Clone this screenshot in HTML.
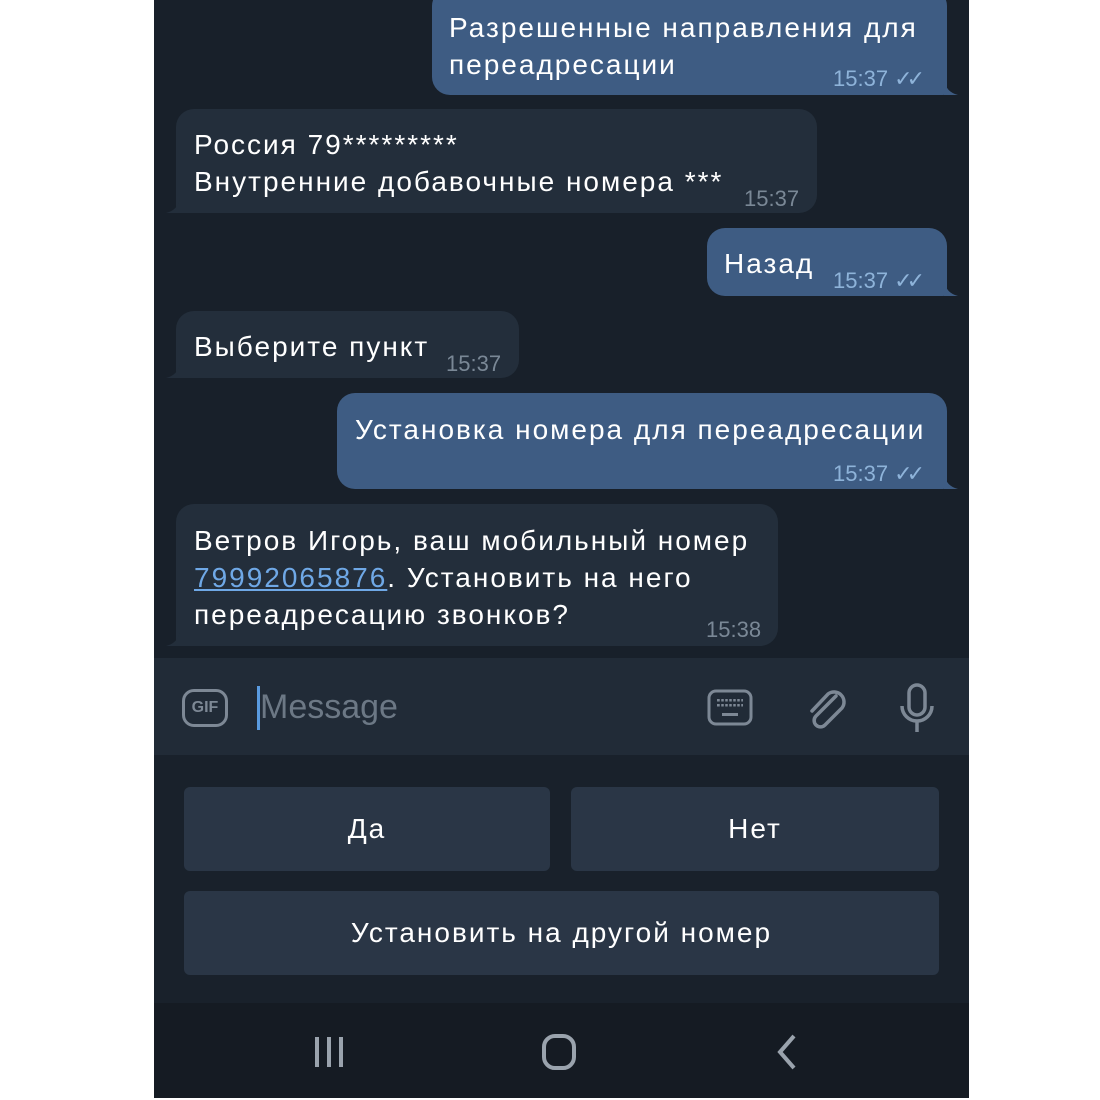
<!DOCTYPE html>
<html><head><meta charset="utf-8"><style>
body{margin:0;width:1100px;height:1100px;background:#fff;position:relative;overflow:hidden;font-family:"Liberation Sans",sans-serif;}
#ph{position:absolute;left:154px;top:0;width:815px;height:1098px;background:#18202a;overflow:hidden}
.b{position:absolute;border-radius:18px;color:#fff;font-size:28px;white-space:nowrap;line-height:37px}
.b>div:first-child{letter-spacing:2px}
.o{background:#3e5c83}
.i{background:#232e3b}
.t{position:absolute;font-size:22px;}
.o .t{color:#8eb3d9}
.i .t{color:#7a8896}
.btn{position:absolute;background:#2a3646;border-radius:6px;color:#fff;font-size:28px;text-align:center;line-height:84px;letter-spacing:2px}
</style></head><body>
<div id="ph">
<div class="b o" style="left:278px;top:-12px;width:515px;height:107px;border-bottom-right-radius:4px">
 <div style="position:absolute;left:17px;top:21px">Разрешенные направления для<br>переадресации</div>
 <div class="t" style="left:401px;top:72px">15:37 <span style="letter-spacing:-6px">✓✓</span></div>
</div>
<svg style="position:absolute;left:790px;top:80px" width="16" height="15"><path d="M0 0 Q2 12 14 15 L0 15Z" fill="#3e5c83"/></svg>
<div class="b i" style="left:22px;top:109px;width:641px;height:104px;border-bottom-left-radius:4px">
 <div style="position:absolute;left:18px;top:17px">Россия 79*********<br>Внутренние добавочные номера ***</div>
 <div class="t" style="left:568px;top:71px">15:37</div>
</div>
<svg style="position:absolute;left:10px;top:198px" width="16" height="15"><path d="M16 0 Q14 12 2 15 L16 15Z" fill="#232e3b"/></svg>
<div class="b o" style="left:553px;top:228px;width:240px;height:68px;border-bottom-right-radius:4px">
 <div style="position:absolute;left:17px;top:17px">Назад</div>
 <div class="t" style="left:126px;top:34px">15:37 <span style="letter-spacing:-6px">✓✓</span></div>
</div>
<svg style="position:absolute;left:790px;top:281px" width="16" height="15"><path d="M0 0 Q2 12 14 15 L0 15Z" fill="#3e5c83"/></svg>
<div class="b i" style="left:22px;top:311px;width:343px;height:67px;border-bottom-left-radius:4px">
 <div style="position:absolute;left:18px;top:17px">Выберите пункт</div>
 <div class="t" style="left:270px;top:34px">15:37</div>
</div>
<svg style="position:absolute;left:10px;top:363px" width="16" height="15"><path d="M16 0 Q14 12 2 15 L16 15Z" fill="#232e3b"/></svg>
<div class="b o" style="left:183px;top:393px;width:610px;height:96px;border-bottom-right-radius:4px">
 <div style="position:absolute;left:18px;top:18px">Установка номера для переадресации</div>
 <div class="t" style="left:496px;top:62px">15:37 <span style="letter-spacing:-6px">✓✓</span></div>
</div>
<svg style="position:absolute;left:790px;top:474px" width="16" height="15"><path d="M0 0 Q2 12 14 15 L0 15Z" fill="#3e5c83"/></svg>
<div class="b i" style="left:22px;top:504px;width:602px;height:142px;border-bottom-left-radius:4px">
 <div style="position:absolute;left:18px;top:18px">Ветров Игорь, ваш мобильный номер<br><span style="color:#6fa8e6;text-decoration:underline">79992065876</span>. Установить на него<br>переадресацию звонков?</div>
 <div class="t" style="left:530px;top:107px">15:38</div>
</div>
<svg style="position:absolute;left:10px;top:631px" width="16" height="15"><path d="M16 0 Q14 12 2 15 L16 15Z" fill="#232e3b"/></svg>
<div style="position:absolute;left:0;top:658px;width:815px;height:97px;background:#212b37">
 <div style="position:absolute;left:28px;top:31px;width:46px;height:38px;border:3px solid #7d8895;border-radius:12px;box-sizing:border-box;color:#7d8895;font-size:16px;font-weight:bold;text-align:center;line-height:32px">GIF</div>
 <div style="position:absolute;left:103px;top:28px;width:3px;height:44px;background:#5a9be0"></div>
 <div style="position:absolute;left:106px;top:30px;color:#6c7885;font-size:34px">Message</div>
 <svg style="position:absolute;left:552px;top:30px" width="50" height="42"><rect x="3" y="3" width="42" height="33" rx="7" fill="none" stroke="#7d8895" stroke-width="3"/><g fill="#7d8895"><rect x="11" y="11" width="26" height="2.5" /><rect x="11" y="16" width="26" height="2.5"/><rect x="16" y="25" width="16" height="3"/></g><g stroke="#212b37" stroke-width="1.5"><path d="M14.5 10V19M18.5 10V19M22.5 10V19M26.5 10V19M30.5 10V19M34.5 10V19"/></g></svg>
 <svg style="position:absolute;left:648px;top:26px" width="50" height="50"><path d="M34 12 L14 32 a6 6 0 0 0 9 9 L40 24 a10 10 0 0 0 -14 -14 L10 27" fill="none" stroke="#7d8895" stroke-width="3.5" stroke-linecap="round"/></svg>
 <svg style="position:absolute;left:744px;top:24px" width="40" height="54"><rect x="11" y="3" width="16" height="30" rx="8" fill="none" stroke="#7d8895" stroke-width="3.5"/><path d="M4 24 a15 15 0 0 0 30 0 M19 39 V50" fill="none" stroke="#7d8895" stroke-width="3.5"/></svg>
</div>
<div style="position:absolute;left:0;top:755px;width:815px;height:248px;background:#19212b">
 <div class="btn" style="left:30px;top:32px;width:366px">Да</div>
 <div class="btn" style="left:417px;top:32px;width:368px">Нет</div>
 <div class="btn" style="left:30px;top:136px;width:755px">Установить на другой номер</div>
</div>
<div style="position:absolute;left:0;top:1003px;width:815px;height:95px;background:#151b23">
 <svg style="position:absolute;left:155px;top:30px" width="40" height="38"><g stroke="#9aa3ad" stroke-width="4"><path d="M8 4V34M20 4V34M32 4V34"/></g></svg>
 <svg style="position:absolute;left:385px;top:30px" width="40" height="38"><rect x="5" y="3" width="30" height="32" rx="11" fill="none" stroke="#9aa3ad" stroke-width="4"/></svg>
 <svg style="position:absolute;left:618px;top:30px" width="30" height="40"><path d="M22 3 L8 19 L22 35" fill="none" stroke="#9aa3ad" stroke-width="4"/></svg>
</div>
</div>
</body></html>
